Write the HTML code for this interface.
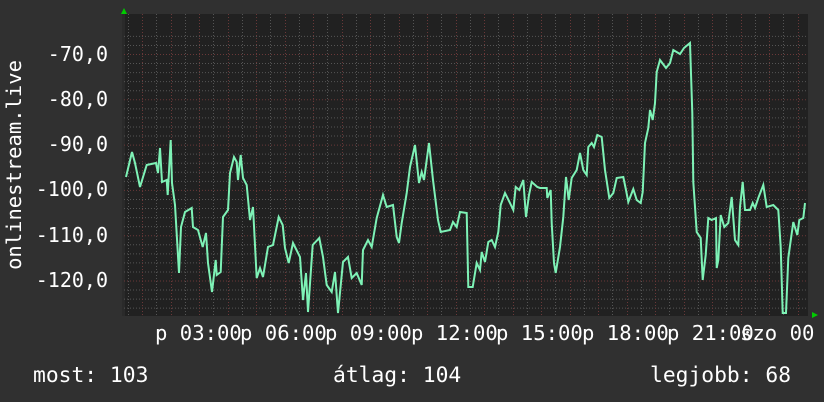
<!DOCTYPE html>
<html><head><style>
body{margin:0;background:#303030;width:824px;height:402px;overflow:hidden;}
svg{display:block}
text{font-family:"DejaVu Sans Mono","Liberation Mono",monospace;fill:#fff}
</style></head><body>
<svg width="824" height="402" viewBox="0 0 824 402">
<rect width="824" height="402" fill="#303030"/>
<rect x="124" y="14" width="684" height="302" fill="#212121"/>
<rect x="122" y="14" width="3" height="302" fill="#2a2a2a"/>
<g stroke="#555" stroke-width="1" stroke-dasharray="1,2" id="minor"></g>
<g id="grid"></g>
<polyline fill="none" stroke="#7ef2b6" stroke-width="2" stroke-linejoin="miter" points="
126,177 132,152 135,163 140,187 146.7,165 156,163 158,173 160,148 162,182 166.7,180 167.7,195 170.7,140 172,183 175,205 179,273 181,227 185,212 191.7,208 193,227 198,230 202.7,247 206,233 208,263 212,292 215.7,260 216.7,275 220.7,272 223,217 228,210 230,173 234,157 236.7,162 238,180 240.7,155 243,178 246.7,185 250,220 253,207 256.7,278 260,268 263,277 268,247 273,245 278.7,217 282.7,225 285,248 288.7,263 293,243 300,257 303,300 306,273 308,312 312.7,245 319.3,238 323,257 326.7,285 331.7,292 335,272 338,313 343,262 348,257 351.7,278 356.7,273 361.7,285 363,250 368,240 371.7,247 376.7,218 383,195 386.7,207 393,205 396.7,237 399,243 401.7,223 406.7,193 410,167 415,145 419,183 421.7,172 424,180 429,143 433,180 438,220 440.7,232 450,230 453,222 456.7,227 460,212 466.7,213 468.3,287 472.7,287 476.7,263 480,270 481.7,252 485,262 488.3,242 491.7,240 495,247 498.3,232 500.7,205 505,193 510,203 513.3,210 515.7,187 519.3,190 523.3,180 526,217 529,195 531.7,182 537.3,187 540,188 546.7,188 547.3,198 550.7,190 551.7,223 554,263 555.7,273 560,247 563.3,217 566,177 568.7,200 571.7,178 576.7,170 580,153 583.3,170 586.7,175 588.3,147 591.7,143 594,147 597.3,135 601.7,137 605,170 609.3,198 613.3,193 616.7,178 623.3,177 626,190 628.3,202 633.3,189 636.7,200 640.7,203 642.7,192 645,143 648.3,128 650,110 652.7,120 655,103 656.7,72 660,60 666,68 670,63 673.3,50 680,54 684,48 690,43 692.3,113 693.3,182 696.7,232 700.7,238 702.7,280 705.7,255 708.3,218 711.7,220 716,218 716.7,268 718.3,260 720.7,215 724.3,227 728.3,223 731.7,197 735,240 738.3,245 740,207 742.7,182 745,210 750,210 752.7,203 755,208 758.3,198 763.3,185 766.7,207 773.3,205 778.3,210 780.7,247 782.7,313 786,313 788.3,258 793.3,222 797.3,235 799.3,220 803.3,218 805,203"/>
<polygon points="121,14 127,14 124,8" fill="#00cc00"/>
<polygon points="812,312 812,318 818,315" fill="#00cc00"/>
<g text-anchor="end" style="font-size:20px">
<text x="108" y="61">-70,0</text>
<text x="108" y="106">-80,0</text>
<text x="108" y="151">-90,0</text>
<text x="108" y="196">-100,0</text>
<text x="108" y="242">-110,0</text>
<text x="108" y="287">-120,0</text>
</g>
<text transform="translate(21,165) rotate(-90)" text-anchor="middle" style="font-size:20.5px">onlinestream.live</text>
<g style="font-size:20.6px">
<text x="155" y="340">p 03:00</text>
<text x="240" y="340">p 06:00</text>
<text x="325" y="340">p 09:00</text>
<text x="411" y="340">p 12:00</text>
<text x="496" y="340">p 15:00</text>
<text x="582" y="340">p 18:00</text>
<text x="667" y="340">p 21:00</text>
<text x="740" y="340">szo 00</text>
</g>
<g style="font-size:21.3px">
<text x="33" y="382">most: 103</text>
<text x="333" y="382">átlag: 104</text>
<text x="650" y="382">legjobb: 68</text>
</g>
</svg>
<script>
var ns="http://www.w3.org/2000/svg",m=document.getElementById('minor'),g=document.getElementById('grid');
function L(p,x1,y1,x2,y2,c){var l=document.createElementNS(ns,'line');l.setAttribute('x1',x1);l.setAttribute('y1',y1);l.setAttribute('x2',x2);l.setAttribute('y2',y2);if(c){l.setAttribute('stroke',c);l.setAttribute('stroke-dasharray','1,2');}p.appendChild(l);}
for(var i=-2;i<40;i++){var y=54+i*9.06;if(y<15||y>315)continue;var maj=(i%5==0);L(maj?g:m,124,y+0.5,808,y+0.5,maj?'#6a3838':null);}
for(var k=-1;k<50;k++){var x=127.75+k*14.25;if(x<125||x>807)continue;var maj=(k%2==1);L(maj?g:m,Math.round(x)+0.5,14,Math.round(x)+0.5,316,maj?'#6a3838':null);}
</script>
</body></html>
